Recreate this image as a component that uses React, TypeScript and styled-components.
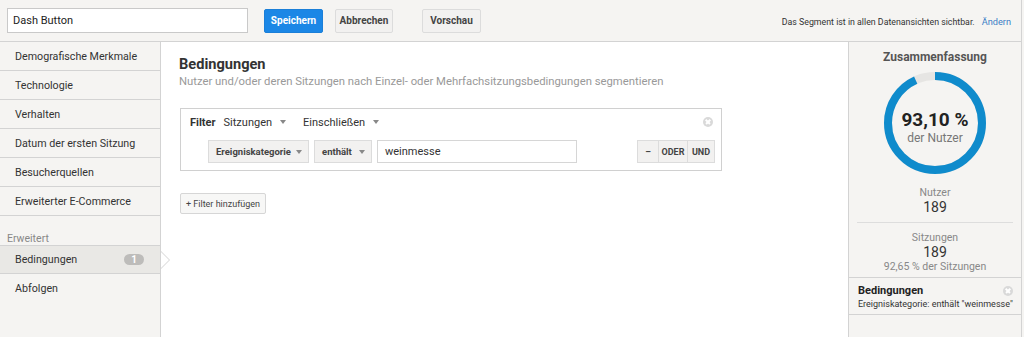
import styled, { createGlobalStyle } from "styled-components";

const GlobalStyle = createGlobalStyle`
  html, body {
    margin: 0;
    padding: 0;
    background: #f5f4f2;
  }
  body {
    font-family: Roboto, "Liberation Sans", Arial, sans-serif;
    color: #333;
  }
  * {
    box-sizing: border-box;
  }
`;

const Page = styled.div`
  width: 1022px;
  height: 337px;
  overflow: hidden;
  border-right: 1px solid #d3d3d3;
  display: flex;
  flex-direction: column;
`;

const Header = styled.div`
  height: 42px;
  flex-shrink: 0;
  border-bottom: 1px solid #d3d3d3;
  display: flex;
  align-items: center;
  padding: 0 10px 0 7px;
`;

const NameInput = styled.div`
  width: 241px;
  height: 25px;
  background: #fff;
  border: 1px solid #c9c9c9;
  font-size: 11px;
  line-height: 24px;
  padding-left: 5px;
  color: #222;
  margin-right: 16px;
`;

const Button = styled.div<{ $primary?: boolean; $w: number; $ml?: number }>`
  width: ${(p) => p.$w}px;
  height: 24px;
  margin-left: ${(p) => p.$ml ?? 0}px;
  display: flex;
  align-items: center;
  justify-content: center;
  border-radius: 2px;
  font-size: 10px;
  font-weight: 700;
  background: ${(p) => (p.$primary ? "#1b87e6" : "#f2f1f0")};
  color: ${(p) => (p.$primary ? "#fff" : "#444")};
  border: 1px solid ${(p) => (p.$primary ? "#1b7fd8" : "#dcdcdc")};
`;

const Visibility = styled.div`
  margin-left: auto;
  font-size: 8.8px;
  color: #333;
  margin-top: 2px;
  a {
    color: #3d7fc6;
    margin-left: 7px;
    font-size: 9.2px;
    text-decoration: none;
  }
`;

const Body = styled.div`
  flex: 1;
  display: flex;
  min-height: 0;
`;

const Sidebar = styled.div`
  width: 161px;
  flex-shrink: 0;
  border-right: 1px solid #d3d3d3;
  background: #f5f4f2;
`;

const NavItem = styled.div<{ $active?: boolean; $topBorder?: boolean; $noBorder?: boolean }>`
  position: relative;
  height: 29px;
  display: flex;
  align-items: center;
  padding: 0 16px 0 15px;
  font-size: 10.7px;
  color: #333;
  background: ${(p) => (p.$active ? "#e9e8e5" : "transparent")};
  border-top: ${(p) => (p.$topBorder ? "1px solid #d3d3d3" : "none")};
  border-bottom: ${(p) => (p.$noBorder ? "1px solid transparent" : "1px solid #d3d3d3")};

  ${(p) =>
    p.$active &&
    `
    &::before, &::after {
      content: "";
      position: absolute;
      top: 50%;
      width: 0;
      height: 0;
      border-style: solid;
    }
    &::before {
      right: -10px;
      margin-top: -9px;
      border-width: 9px 0 9px 9px;
      border-color: transparent transparent transparent #d3d3d3;
    }
    &::after {
      right: -9px;
      margin-top: -8px;
      border-width: 8px 0 8px 8px;
      border-color: transparent transparent transparent #fff;
    }
  `}
`;

const SectionLabel = styled.div`
  height: 29px;
  padding: 16px 0 0 7px;
  font-size: 10.5px;
  color: #888;
`;

const Badge = styled.span`
  margin-left: auto;
  background: #bdbcba;
  color: #fff;
  font-size: 10px;
  font-weight: 700;
  border-radius: 6px;
  width: 20px;
  height: 11px;
  line-height: 11px;
  text-align: center;
`;

const Main = styled.div`
  flex: 1;
  background: #fff;
  padding: 13px 126px 0 18px;
`;

const Title = styled.h2`
  margin: 0;
  font-size: 14.6px;
  font-weight: 700;
  color: #333;
`;

const Subtitle = styled.p`
  margin: 2px 0 0;
  font-size: 11.3px;
  color: #999;
`;

const FilterBox = styled.div`
  margin-top: 20px;
  margin-left: 1px;
  border: 1px solid #d0d0d0;
  padding: 6px 6px 7px 9px;
`;

const FilterHead = styled.div`
  display: flex;
  align-items: center;
  height: 14px;
  font-size: 11px;
  color: #333;
  padding-right: 2px;
  b {
    font-weight: 700;
    margin-right: 8px;
  }
`;

const HeadSelect = styled.span`
  display: inline-flex;
  align-items: center;
  margin-right: 17px;
`;

const Caret = styled.span`
  display: inline-block;
  width: 0;
  height: 0;
  margin-left: 8px;
  border-left: 3px solid transparent;
  border-right: 3px solid transparent;
  border-top: 4px solid #888;
`;

const CloseIcon = styled.span<{ $size?: number }>`
  margin-left: auto;
  width: ${(p) => p.$size ?? 10}px;
  height: ${(p) => p.$size ?? 10}px;
  border-radius: 50%;
  background: #d9d9d9;
  position: relative;
  flex-shrink: 0;
  &::before, &::after {
    content: "";
    position: absolute;
    left: 50%;
    top: 50%;
    width: 6px;
    height: 1.5px;
    margin: -0.75px 0 0 -3px;
    background: #fff;
    transform: rotate(45deg);
  }
  &::after {
    transform: rotate(-45deg);
  }
`;

const FilterRow = styled.div`
  display: flex;
  align-items: center;
  margin-top: 11px;
  padding-left: 18px;
`;

const Select = styled.div<{ $w: number }>`
  width: ${(p) => p.$w}px;
  height: 23px;
  background: #f2f1f0;
  border: 1px solid #dcdcdc;
  display: flex;
  align-items: center;
  padding: 0 0 0 7px;
  font-size: 9.5px;
  font-weight: 700;
  color: #444;
  margin-right: 5px;
  ${Caret} {
    margin-left: auto;
    margin-right: 6px;
  }
`;

const ValueInput = styled.div`
  width: 200px;
  height: 23px;
  border: 1px solid #d6d6d6;
  font-size: 11px;
  color: #333;
  line-height: 21px;
  padding-left: 7px;
`;

const ButtonGroup = styled.div`
  margin-left: auto;
  display: flex;
  height: 23px;
  border: 1px solid #dcdcdc;
  background: #f2f1f0;
`;

const GroupBtn = styled.div<{ $w: number }>`
  width: ${(p) => p.$w}px;
  display: flex;
  align-items: center;
  justify-content: center;
  font-size: 9px;
  font-weight: 700;
  color: #444;
  & + & {
    border-left: 1px solid #dcdcdc;
  }
`;

const AddButton = styled.div`
  margin-top: 22px;
  width: 86px;
  height: 21px;
  border: 1px solid #d6d6d6;
  border-radius: 2px;
  background: #f7f7f6;
  font-size: 9px;
  color: #444;
  display: flex;
  align-items: center;
  justify-content: center;
  margin-left: 1px;
`;

const Summary = styled.div`
  width: 173px;
  flex-shrink: 0;
  border-left: 1px solid #d3d3d3;
  background: #f5f4f2;
  display: flex;
  flex-direction: column;
`;

const SummaryTitle = styled.div`
  text-align: center;
  font-size: 12px;
  font-weight: 700;
  color: #555;
  margin-top: 8px;
`;

const Donut = styled.div`
  position: relative;
  width: 104px;
  height: 104px;
  margin: 7px auto 0;
  svg {
    display: block;
  }
`;

const DonutText = styled.div`
  position: absolute;
  inset: 0;
  display: flex;
  flex-direction: column;
  align-items: center;
  justify-content: center;
  padding-top: 8px;
  strong {
    font-size: 19px;
    font-weight: 700;
    color: #222;
    line-height: 22px;
  }
  span {
    font-size: 12px;
    color: #777;
    line-height: 15px;
  }
`;

const Stat = styled.div<{ $border?: boolean }>`
  margin: 0 8px;
  text-align: center;
  padding: ${(p) => (p.$border ? "11px 0 7px" : "8px 0 3px")};
  border-bottom: ${(p) => (p.$border ? "1px solid #ddd" : "none")};
`;

const StatLabel = styled.div`
  font-size: 10.5px;
  color: #888;
  line-height: 13px;
`;

const StatValue = styled.div`
  font-size: 14px;
  color: #333;
  line-height: 16px;
`;

const StatSub = styled.div`
  font-size: 10.5px;
  color: #888;
  line-height: 14px;
`;

const CondCard = styled.div`
  border-top: 1px solid #d3d3d3;
  border-bottom: 1px solid #d3d3d3;
  padding: 6px 8px 5px 9px;
  ${CloseIcon} {
    margin-left: auto;
  }
`;

const CondHead = styled.div`
  display: flex;
  align-items: center;
  font-size: 11px;
  font-weight: 700;
  color: #222;
`;

const CondText = styled.div`
  font-size: 9px;
  color: #333;
  margin-top: 2px;
`;

const navItems = [
  "Demografische Merkmale",
  "Technologie",
  "Verhalten",
  "Datum der ersten Sitzung",
  "Besucherquellen",
  "Erweiterter E-Commerce",
];

const pct = 93.1;
const r = 47;
const circ = 2 * Math.PI * r;

export default function App() {
  return (
    <>
      <GlobalStyle />
      <Page>
        <Header>
          <NameInput>Dash Button</NameInput>
          <Button $primary $w={59}>Speichern</Button>
          <Button $w={58} $ml={12}>Abbrechen</Button>
          <Button $w={59} $ml={29}>Vorschau</Button>
          <Visibility>
            Das Segment ist in allen Datenansichten sichtbar.<a>Ändern</a>
          </Visibility>
        </Header>
        <Body>
          <Sidebar>
            {navItems.map((n) => (
              <NavItem key={n}>{n}</NavItem>
            ))}
            <SectionLabel>Erweitert</SectionLabel>
            <NavItem $active $topBorder>
              Bedingungen
              <Badge>1</Badge>
            </NavItem>
            <NavItem $noBorder>Abfolgen</NavItem>
          </Sidebar>
          <Main>
            <Title>Bedingungen</Title>
            <Subtitle>
              Nutzer und/oder deren Sitzungen nach Einzel- oder Mehrfachsitzungsbedingungen segmentieren
            </Subtitle>
            <FilterBox>
              <FilterHead>
                <b>Filter</b>
                <HeadSelect>
                  Sitzungen <Caret />
                </HeadSelect>
                <HeadSelect>
                  Einschließen <Caret />
                </HeadSelect>
                <CloseIcon />
              </FilterHead>
              <FilterRow>
                <Select $w={101}>
                  Ereigniskategorie <Caret />
                </Select>
                <Select $w={58}>
                  enthält <Caret />
                </Select>
                <ValueInput>weinmesse</ValueInput>
                <ButtonGroup>
                  <GroupBtn $w={20}>–</GroupBtn>
                  <GroupBtn $w={29}>ODER</GroupBtn>
                  <GroupBtn $w={27}>UND</GroupBtn>
                </ButtonGroup>
              </FilterRow>
            </FilterBox>
            <AddButton>+ Filter hinzufügen</AddButton>
          </Main>
          <Summary>
            <SummaryTitle>Zusammenfassung</SummaryTitle>
            <Donut>
              <svg width="104" height="104" viewBox="0 0 104 104">
                <circle cx="52" cy="52" r={r} fill="none" stroke="#e6e5e3" strokeWidth="8" />
                <circle
                  cx="52"
                  cy="52"
                  r={r}
                  fill="none"
                  stroke="#0f8bcc"
                  strokeWidth="8"
                  strokeDasharray={`${(circ * pct) / 100} ${circ}`}
                  transform="rotate(-90 52 52)"
                />
              </svg>
              <DonutText>
                <strong>93,10 %</strong>
                <span>der Nutzer</span>
              </DonutText>
            </Donut>
            <Stat $border>
              <StatLabel>Nutzer</StatLabel>
              <StatValue>189</StatValue>
            </Stat>
            <Stat>
              <StatLabel>Sitzungen</StatLabel>
              <StatValue>189</StatValue>
              <StatSub>92,65 % der Sitzungen</StatSub>
            </Stat>
            <CondCard>
              <CondHead>
                Bedingungen
                <CloseIcon />
              </CondHead>
              <CondText>Ereigniskategorie: enthält "weinmesse"</CondText>
            </CondCard>
          </Summary>
        </Body>
      </Page>
    </>
  );
}
